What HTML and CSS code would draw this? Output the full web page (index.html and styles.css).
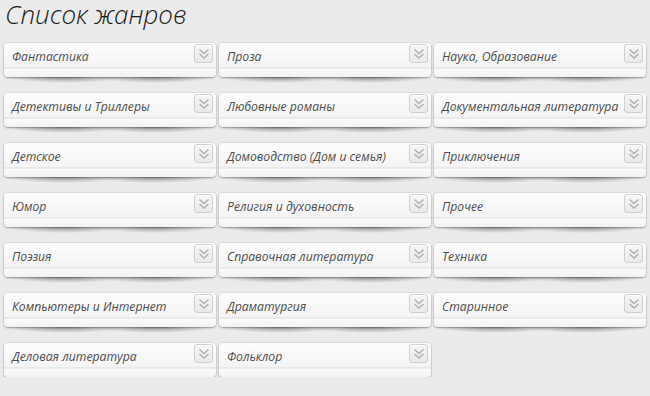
FILE: index.html
```html
<!DOCTYPE html>
<html lang="ru">
<head>
    <meta charset="UTF-8">
    <title>Список жанров</title>
    <link rel="stylesheet" href="styles.css">
</head>
<body>
    <h1>Список жанров</h1>
    <div class="genres">
        <div class="genre"><span>Фантастика</span><i class="toggle"></i></div>
        <div class="genre"><span>Проза</span><i class="toggle"></i></div>
        <div class="genre"><span>Наука, Образование</span><i class="toggle"></i></div>
        <div class="genre"><span>Детективы и Триллеры</span><i class="toggle"></i></div>
        <div class="genre"><span>Любовные романы</span><i class="toggle"></i></div>
        <div class="genre"><span>Документальная литература</span><i class="toggle"></i></div>
        <div class="genre"><span>Детское</span><i class="toggle"></i></div>
        <div class="genre"><span>Домоводство (Дом и семья)</span><i class="toggle"></i></div>
        <div class="genre"><span>Приключения</span><i class="toggle"></i></div>
        <div class="genre"><span>Юмор</span><i class="toggle"></i></div>
        <div class="genre"><span>Религия и духовность</span><i class="toggle"></i></div>
        <div class="genre"><span>Прочее</span><i class="toggle"></i></div>
        <div class="genre"><span>Поэзия</span><i class="toggle"></i></div>
        <div class="genre"><span>Справочная литература</span><i class="toggle"></i></div>
        <div class="genre"><span>Техника</span><i class="toggle"></i></div>
        <div class="genre"><span>Компьютеры и Интернет</span><i class="toggle"></i></div>
        <div class="genre"><span>Драматургия</span><i class="toggle"></i></div>
        <div class="genre"><span>Старинное</span><i class="toggle"></i></div>
        <div class="genre"><span>Деловая литература</span><i class="toggle"></i></div>
        <div class="genre"><span>Фольклор</span><i class="toggle"></i></div>
    </div>

    <script>
        // chevron icon into every toggle box
        const chevron = '<svg width="14" height="14" viewBox="0 0 14 14"><path d="M2.5 2.5 L7 6.5 L11.5 2.5 M2.5 7 L7 11 L11.5 7" fill="none" stroke="#b0b0b0" stroke-width="1.5"/></svg>';
        document.querySelectorAll(".toggle").forEach(el => el.innerHTML = chevron);
    </script>
</body>
</html>
```

FILE: styles.css
```css
body {
    margin: 0;
    padding: 0 4px;
    background-color: #ebebeb;
    font-family: "Open Sans", Arial, sans-serif;
}
h1 {
    margin: 0;
    padding: 2px 0 0 1px;
    height: 41px;
    line-height: 24px;
    font-size: 26px;
    font-weight: 300;
    font-style: italic;
    color: #1a1a1a;
}
.genres {
    display: grid;
    grid-template-columns: repeat(3, 212px);
    column-gap: 3px;
    row-gap: 16px;
}
.genre {
    position: relative;
    display: flex;
    justify-content: space-between;
    align-items: flex-start;
    height: 34px;
    box-sizing: border-box;
    padding: 1px 3px 0 8px;
    border-radius: 4px;
    background: linear-gradient(to bottom,
        #fdfdfd 0,
        #f4f4f4 24px,
        #dcdcdc 25px,
        #fbfbfb 26px,
        #f2f2f2 100%);
    box-shadow: 0 0 0 1px rgba(0, 0, 0, 0.05), 0 1px 2px rgba(0, 0, 0, 0.3);
}
.genre::after {
    content: "";
    position: absolute;
    left: 4px;
    right: 4px;
    top: 100%;
    height: 10px;
    background:
        radial-gradient(ellipse 60px 6px at 28% 0, rgba(0, 0, 0, 0.38), transparent),
        radial-gradient(ellipse 60px 6px at 72% 0, rgba(0, 0, 0, 0.38), transparent);
    pointer-events: none;
}
.genre span {
    line-height: 25px;
    font-size: 12.2px;
    font-style: italic;
    color: #4e4e4e;
    white-space: nowrap;
}
.toggle {
    display: flex;
    align-items: center;
    justify-content: center;
    width: 19px;
    height: 19px;
    box-sizing: border-box;
    border: 1px solid #cfcfcf;
    border-radius: 3px;
    background: linear-gradient(to bottom, #f6f6f6, #eaeaea);
    box-shadow: inset 0 1px 0 #fff;
}
```
